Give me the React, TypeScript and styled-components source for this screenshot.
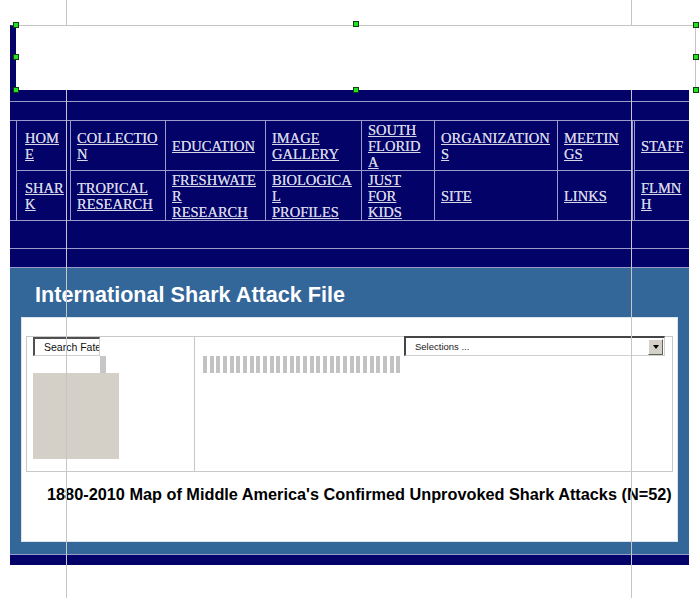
import React from 'react';
import styled, { createGlobalStyle } from 'styled-components';

const NAVY = '#020268';
const BLUE = '#336699';
const RULE = '#9a9acb';

const GlobalStyle = createGlobalStyle`
  body {
    margin: 0;
    background: #ffffff;
  }
`;

const navRows: string[][][] = [
  [['HOM', 'E'], ['COLLECTIO', 'N'], ['EDUCATION'], ['IMAGE ', 'GALLERY'], ['SOUTH', 'FLORID', 'A'], ['ORGANIZATION', 'S'], ['MEETIN', 'GS'], ['STAFF']],
  [['SHAR', 'K'], ['TROPICAL', 'RESEARCH'], ['FRESHWATE', 'R', 'RESEARCH'], ['BIOLOGICA', 'L', 'PROFILES'], ['JUST', 'FOR', 'KIDS'], ['SITE'], ['LINKS'], ['FLMN', 'H']],
];

const handles = [
  [16, 25], [16, 57], [16, 90],
  [356, 24], [356, 90],
  [696, 25], [696, 57], [696, 90],
];

export default function App() {
  const renderCell = (lines: string[], row: number, i: number) => (
    <NavCell key={`${row}-${i}`} $top={row === 0} $first={i === 0}>
      <NavLink href="#">
        {lines.map((l, k) => (
          <React.Fragment key={k}>
            {k > 0 && <br />}
            {l}
          </React.Fragment>
        ))}
      </NavLink>
    </NavCell>
  );

  return (
    <Page>
      <GlobalStyle />
      <Guide $x={66} />
      <Guide $x={631} />

      <SelectedBox>
        {handles.map(([x, y], i) => (
          <Handle key={i} style={{ left: x - 16 - 3, top: y - 26 - 3 }} />
        ))}
      </SelectedBox>

      <Frame>
        <Band $h={12} />
        <Band $h={19} />
        <Nav>
          {navRows[0].slice(0, 1).map((c, i) => renderCell(c, 0, i))}
          <Spacer />
          {navRows[0].slice(1, 7).map((c, i) => renderCell(c, 0, i + 1))}
          <Spacer />
          {navRows[0].slice(7).map((c, i) => renderCell(c, 0, i + 7))}
          {navRows[1].map((c, i) => renderCell(c, 1, i))}
        </Nav>
        <Band $h={28} />
        <Band $h={19} />

        <Section>
          <Title>International Shark Attack File</Title>
          <Panel>
            <MapTable>
              <ToolCell>
                <SearchBox>Search Fate</SearchBox>
                <Tab />
                <Swatch />
              </ToolCell>
              <MapCell>
                <Stripes />
                <SelectBox>
                  <span>Selections ...</span>
                  <DropButton>
                    <Arrow />
                  </DropButton>
                </SelectBox>
              </MapCell>
            </MapTable>
            <Caption>
              1880-2010 Map of Middle America's Confirmed Unprovoked Shark Attacks (N=52)
            </Caption>
          </Panel>
        </Section>
        <Band $h={10} $plain />
      </Frame>
    </Page>
  );
}

const Page = styled.div`
  position: relative;
  min-height: 598px;
  box-sizing: border-box;
  padding: 25px 0 0 10px;
  overflow: hidden;
`;

const Guide = styled.div<{ $x: number }>`
  position: absolute;
  top: 0;
  bottom: 0;
  left: ${(p) => p.$x}px;
  width: 1px;
  background: #c6c6c6;
  z-index: 2;
  pointer-events: none;
`;

const SelectedBox = styled.div`
  position: relative;
  z-index: 3;
  width: 686px;
  height: 65px;
  box-sizing: border-box;
  background: #ffffff;
  border-top: 1px solid #c4c4c4;
  border-left: 6px solid ${NAVY};
  border-right: 1px solid #c4c4c4;
`;

const Handle = styled.span`
  position: absolute;
  width: 6px;
  height: 6px;
  box-sizing: border-box;
  background: #22e022;
  border: 1px solid #104010;
`;

const Frame = styled.div`
  width: 679px;
  background: ${NAVY};
`;

const Band = styled.div<{ $h: number; $plain?: boolean }>`
  height: ${(p) => p.$h}px;
  box-sizing: border-box;
  border-bottom: ${(p) => (p.$plain ? 'none' : `1px solid ${RULE}`)};
`;

const Nav = styled.div`
  display: grid;
  grid-template-columns: 50px 4px 95px 100px 96px 73px 123px 75px 2px 55px;
  grid-template-rows: 50px 49px;
  padding-left: 6px;
  border-bottom: 1px solid ${RULE};
`;

const NavCell = styled.div<{ $top: boolean; $first: boolean }>`
  display: flex;
  align-items: center;
  box-sizing: border-box;
  padding: 0 2px 0 ${(p) => (p.$first ? 8 : 6)}px;
  border-left: 1px solid ${RULE};
  border-bottom: ${(p) => (p.$top ? `1px solid ${RULE}` : 'none')};
  font-family: 'Liberation Serif', 'Times New Roman', serif;
  font-size: 14.5px;
  line-height: 16px;
  white-space: nowrap;
`;

const Spacer = styled.div`
  grid-row: span 2;
  border-left: 1px solid ${RULE};
`;

const NavLink = styled.a`
  color: #d6d6e6;
  text-decoration: underline;
  text-shadow: 0 0 0.4px #d6d6e6;
`;

const Section = styled.div`
  height: 287px;
  box-sizing: border-box;
  background: ${BLUE};
  border-bottom: 1px solid ${RULE};
  padding: 14px 0 0 11px;
`;

const Title = styled.h1`
  margin: 0 0 0 14px;
  font-family: 'Liberation Sans', Arial, sans-serif;
  font-weight: bold;
  font-size: 21.6px;
  line-height: 26px;
  color: #ffffff;
`;

const Panel = styled.div`
  margin-top: 9px;
  width: 657px;
  height: 225px;
  box-sizing: border-box;
  background: #ffffff;
  border: 1px solid #dde4ec;
  padding: 18px 0 0 4px;
`;

const MapTable = styled.div`
  display: grid;
  grid-template-columns: 168px 1fr;
  width: 647px;
  height: 136px;
  box-sizing: border-box;
  border: 1px solid #c8c8c8;
`;

const ToolCell = styled.div`
  display: flex;
  flex-direction: column;
  align-items: flex-start;
  border-right: 1px solid #c8c8c8;
  padding-left: 6px;
`;

const SearchBox = styled.div`
  width: 67px;
  height: 19px;
  box-sizing: border-box;
  display: flex;
  align-items: center;
  padding-left: 9px;
  overflow: hidden;
  white-space: nowrap;
  border-top: 2px solid #505050;
  border-left: 2px solid #505050;
  border-right: 1px solid #cfcfcf;
  border-bottom: 1px solid #cfcfcf;
  font-family: 'Liberation Sans', Arial, sans-serif;
  font-size: 10.5px;
  color: #111111;
`;

const Tab = styled.div`
  margin-left: 67px;
  width: 6px;
  height: 17px;
  background: #c6c6c6;
`;

const Swatch = styled.div`
  width: 86px;
  height: 86px;
  background: #d4d0c8;
`;

const MapCell = styled.div`
  display: flex;
  align-items: flex-start;
  padding-left: 8px;
`;

const Stripes = styled.div`
  margin-top: 19px;
  width: 200px;
  height: 17px;
  background: repeating-linear-gradient(
    90deg,
    #c2c2c2 0,
    #c2c2c2 4px,
    transparent 4px,
    transparent 6.667px
  );
`;

const SelectBox = styled.div`
  margin: -1px 0 0 1px;
  width: 261px;
  height: 20px;
  box-sizing: border-box;
  display: flex;
  align-items: center;
  justify-content: space-between;
  padding: 0 1px 0 9px;
  background: #ffffff;
  border-top: 2px solid #454545;
  border-left: 2px solid #454545;
  border-right: 1px solid #d0d0d0;
  border-bottom: 1px solid #d0d0d0;
  font-family: 'Liberation Sans', Arial, sans-serif;
  font-size: 9.5px;
  color: #222222;
`;

const DropButton = styled.div`
  width: 15px;
  height: 16px;
  box-sizing: border-box;
  display: flex;
  align-items: center;
  justify-content: center;
  background: #d4d0c8;
  border: 1px solid;
  border-color: #ffffff #606060 #606060 #ffffff;
`;

const Arrow = styled.span`
  width: 0;
  height: 0;
  border-left: 3px solid transparent;
  border-right: 3px solid transparent;
  border-top: 4px solid #000000;
`;

const Caption = styled.p`
  margin: 12px 0 0 21px;
  font-family: 'Liberation Sans', Arial, sans-serif;
  font-weight: bold;
  font-size: 16.3px;
  line-height: 20px;
  color: #000000;
  white-space: nowrap;
`;
